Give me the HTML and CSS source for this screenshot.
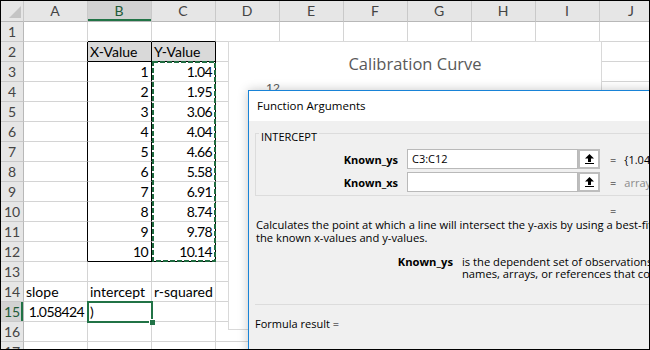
FILE: index.html
```html
<!DOCTYPE html>
<html lang="en">
<head>
  <meta charset="UTF-8" />
  <title>Calibration Curve - INTERCEPT</title>
  <link rel="stylesheet" href="styles.css">
</head>
<body>

  <div class="screen">

    <table class="sheet">
      <colgroup>
        <col class="col-rh">
        <col><col><col><col><col><col><col><col><col><col>
      </colgroup>
      <thead>
        <tr>
          <th class="corner">
            <svg width="12" height="12" viewBox="0 0 12 12"><polygon points="12,0 12,12 0,12" fill="#c4c4c4"/></svg>
          </th>
          <th>A</th><th class="is-sel">B</th><th>C</th><th>D</th><th>E</th>
          <th>F</th><th>G</th><th>H</th><th>I</th><th>J</th>
        </tr>
      </thead>
      <tbody>
        <tr><th>1</th><td></td><td class="bb"></td><td class="bb"></td><td></td><td></td><td></td><td></td><td></td><td></td><td></td></tr>
        <tr><th>2</th><td class="rb"></td><td class="title-cell rb bb">X-Value</td><td class="title-cell rb bb">Y-Value</td><td></td><td></td><td></td><td></td><td></td><td></td><td></td></tr>
        <tr><th>3</th><td class="rb"></td><td class="num rb">1</td><td class="num rb">1.04</td><td></td><td></td><td></td><td></td><td></td><td></td><td></td></tr>
        <tr><th>4</th><td class="rb"></td><td class="num rb">2</td><td class="num rb">1.95</td><td></td><td></td><td></td><td></td><td></td><td></td><td></td></tr>
        <tr><th>5</th><td class="rb"></td><td class="num rb">3</td><td class="num rb">3.06</td><td></td><td></td><td></td><td></td><td></td><td></td><td></td></tr>
        <tr><th>6</th><td class="rb"></td><td class="num rb">4</td><td class="num rb">4.04</td><td></td><td></td><td></td><td></td><td></td><td></td><td></td></tr>
        <tr><th>7</th><td class="rb"></td><td class="num rb">5</td><td class="num rb">4.66</td><td></td><td></td><td></td><td></td><td></td><td></td><td></td></tr>
        <tr><th>8</th><td class="rb"></td><td class="num rb">6</td><td class="num rb">5.58</td><td></td><td></td><td></td><td></td><td></td><td></td><td></td></tr>
        <tr><th>9</th><td class="rb"></td><td class="num rb">7</td><td class="num rb">6.91</td><td></td><td></td><td></td><td></td><td></td><td></td><td></td></tr>
        <tr><th>10</th><td class="rb"></td><td class="num rb">8</td><td class="num rb">8.74</td><td></td><td></td><td></td><td></td><td></td><td></td><td></td></tr>
        <tr><th>11</th><td class="rb"></td><td class="num rb">9</td><td class="num rb">9.78</td><td></td><td></td><td></td><td></td><td></td><td></td><td></td></tr>
        <tr><th>12</th><td class="rb"></td><td class="num rb bb">10</td><td class="num rb bb">10.14</td><td></td><td></td><td></td><td></td><td></td><td></td><td></td></tr>
        <tr><th>13</th><td></td><td></td><td></td><td></td><td></td><td></td><td></td><td></td><td></td><td></td></tr>
        <tr><th>14</th><td>slope</td><td>intercept</td><td>r-squared</td><td></td><td></td><td></td><td></td><td></td><td></td><td></td></tr>
        <tr><th class="is-sel">15</th><td class="num">1.058424</td><td class="active">)</td><td></td><td></td><td></td><td></td><td></td><td></td><td></td><td></td></tr>
        <tr><th>16</th><td></td><td></td><td></td><td></td><td></td><td></td><td></td><td></td><td></td><td></td></tr>
        <tr><th>17</th><td></td><td></td><td></td><td></td><td></td><td></td><td></td><td></td><td></td><td></td></tr>
      </tbody>
    </table>

    <!-- copy range C3:C12 -->
    <svg class="ants" width="650" height="350">
      <rect x="153" y="62" width="62" height="199" fill="none" stroke="#1f6b40" stroke-width="2" stroke-dasharray="5 2" shape-rendering="crispEdges"/>
    </svg>

    <div class="chart">
      <div class="chart-title">Calibration Curve</div>
      <div class="axis-label">12</div>
    </div>

    <div class="dialog">
      <div class="dlg-title">Function Arguments</div>
      <div class="dlg-body">
        <fieldset class="fn-box">
          <legend>INTERCEPT</legend>
          <div class="arg-row">
            <label class="arg-name">Known_ys</label>
            <div class="arg-input">C3:C12</div>
            <span class="ref-btn">
              <svg width="9" height="10" viewBox="0 0 9 10"><path d="M4.5 0 L9 4.5 H6 V8 H3 V4.5 H0 Z" fill="#000"/><rect y="9" width="9" height="1" fill="#000"/></svg>
            </span>
            <span class="arg-eq">=</span>
            <span class="arg-val">{1.04;1.95;3.06;4.04;4.66;5.58;6.91;8.74;9.78;10.14}</span>
          </div>
          <div class="arg-row">
            <label class="arg-name">Known_xs</label>
            <div class="arg-input"></div>
            <span class="ref-btn">
              <svg width="9" height="10" viewBox="0 0 9 10"><path d="M4.5 0 L9 4.5 H6 V8 H3 V4.5 H0 Z" fill="#000"/><rect y="9" width="9" height="1" fill="#000"/></svg>
            </span>
            <span class="arg-eq">=</span>
            <span class="arg-val hint">array</span>
          </div>
        </fieldset>

        <div class="eq-line">=</div>

        <p class="fn-desc">Calculates the point at which a line will intersect the y-axis by using a best-fit regression line plotted through<br>the known x-values and y-values.</p>

        <div class="arg-help">
          <span class="help-name">Known_ys</span>
          <span class="help-text">is the dependent set of observations or data points and can be numbers or<br>names, arrays, or references that contain numbers.</span>
        </div>

        <div class="dlg-rule"></div>
        <div class="result">Formula result =</div>
      </div>
    </div>

  </div>

</body>
</html>
```

FILE: styles.css
```css
body {
  margin: 0;
  background-color: #fff;
}

.screen {
  position: relative;
  width: 650px;
  height: 350px;
  padding: 1px 0 0 1px;
  box-sizing: border-box;
  overflow: hidden;
  font-family: Lato, "Liberation Sans", sans-serif;
  font-size: 14px;
  color: #000;
}

/* black frame round the whole shot */
.screen::after {
  content: "";
  position: absolute;
  top: 0;
  left: 0;
  right: 0;
  bottom: 0;
  border: 1px solid #000;
  z-index: 10;
  pointer-events: none;
}

/* ---------- sheet ---------- */

.sheet {
  border-collapse: separate;
  border-spacing: 0;
  table-layout: fixed;
  width: 663px;
}

.sheet col { width: 64px; }
.sheet col.col-rh { width: 23px; }

.sheet th,
.sheet td {
  height: 19px;
  padding: 0 3px 0 2px;
  line-height: 19px;
  border-right: 1px solid #d4d4d4;
  border-bottom: 1px solid #d4d4d4;
  white-space: nowrap;
  overflow: hidden;
  font-weight: normal;
  text-align: left;
}

.sheet thead th {
  height: 20px;
  line-height: 20px;
  background-color: #e6e6e6;
  border-right-color: #c9c9c9;
  border-bottom-color: #b8b8b8;
  color: #444;
  text-align: center;
}

.sheet tbody th {
  background-color: #e6e6e6;
  border-right-color: #b8b8b8;
  border-bottom-color: #c9c9c9;
  color: #444;
  text-align: center;
  padding: 0;
}

.sheet th.corner {
  padding: 0;
  text-align: right;
  vertical-align: bottom;
  line-height: 0;
}

.sheet th.corner svg {
  margin: 0 2px 3px 0;
}

.sheet thead th.is-sel {
  background-color: #d2d2d2;
  box-shadow: inset 0 -2px 0 #217346;
  color: #1f5a37;
}

.sheet tbody th.is-sel {
  background-color: #d2d2d2;
  box-shadow: inset -2px 0 0 #217346;
  color: #1f5a37;
}

.sheet td.num {
  text-align: right;
  letter-spacing: -0.6px;
}

.sheet td.rb { border-right-color: #000; }
.sheet td.bb { border-bottom-color: #000; }

.sheet td.title-cell {
  background-color: #d9d9d9;
}

.sheet td.active {
  position: relative;
  outline: 2px solid #217346;
  outline-offset: -1px;
  overflow: visible;
}

.sheet td.active::after {
  content: "";
  position: absolute;
  right: -4px;
  bottom: -4px;
  width: 5px;
  height: 5px;
  background-color: #217346;
  border: 1px solid #fff;
  border-width: 1px 0 0 1px;
}

.ants {
  position: absolute;
  top: 0;
  left: 0;
  pointer-events: none;
}

/* ---------- chart ---------- */

.chart {
  position: absolute;
  left: 228px;
  top: 41px;
  width: 374px;
  height: 289px;
  background-color: #fff;
  border: 1px solid #d9d9d9;
  box-sizing: border-box;
}

.chart-title {
  margin-top: 11px;
  text-align: center;
  font-family: "Open Sans", sans-serif;
  font-size: 16.5px;
  line-height: 22px;
  color: #595959;
}

.axis-label {
  margin: 7px 0 0 37px;
  font-size: 12px;
  line-height: 12px;
  color: #595959;
}

/* ---------- dialog ---------- */

.dialog {
  position: absolute;
  left: 248px;
  top: 90px;
  width: 560px;
  height: 290px;
  border-top: 1px solid #1883d7;
  border-left: 1px solid #1883d7;
  background-color: #f0f0f0;
  box-shadow: 0 0 10px rgba(0, 0, 0, 0.22);
  font-family: "Open Sans", sans-serif;
  font-size: 11px;
  color: #000;
}

.dlg-title {
  height: 30px;
  line-height: 30px;
  padding-left: 8px;
  background-color: #fff;
  font-size: 11.5px;
}

.dlg-body {
  padding-left: 6px;
}

.fn-box {
  margin: 2px 0 0 0;
  padding: 0 0 3px 0;
  width: 460px;
  border: 1px solid #dcdcdc;
}

.fn-box legend {
  margin-left: 3px;
  padding: 7px 2px 0 2px;
  line-height: 14px;
}

.arg-row {
  display: flex;
  align-items: center;
  height: 20px;
  margin-top: 3px;
}

.arg-row:first-of-type {
  margin-top: 5px;
}

.arg-name {
  flex-shrink: 0;
  width: 142px;
  text-align: right;
  font-weight: bold;
}

.arg-input {
  flex-shrink: 0;
  width: 171px;
  height: 20px;
  margin-left: 9px;
  padding-left: 4px;
  line-height: 18px;
  background-color: #fff;
  border: 1px solid #b9b9b9;
  box-sizing: border-box;
}

.ref-btn {
  flex-shrink: 0;
  display: flex;
  align-items: center;
  justify-content: center;
  width: 22px;
  height: 20px;
  background-color: #fff;
  border: 2px solid #bdbdbd;
  box-sizing: border-box;
}

.arg-eq {
  margin-left: 10px;
}

.arg-val {
  margin-left: 8px;
  white-space: nowrap;
}

.arg-val.hint {
  color: #8c8c8c;
}

.eq-line {
  margin-top: 7px;
  padding-left: 355px;
  line-height: 16px;
}

.fn-desc {
  margin: -1px 0 0 1px;
  line-height: 13px;
  white-space: nowrap;
  font-size: 11.2px;
}

.arg-help {
  display: flex;
  margin-top: 12px;
  line-height: 12px;
  white-space: nowrap;
  font-size: 11.2px;
}

.help-name {
  flex-shrink: 0;
  width: 198px;
  text-align: right;
  font-weight: bold;
}

.help-text {
  margin-left: 9px;
}

.dlg-rule {
  margin-top: 24px;
  width: 500px;
  border-top: 1px solid #dcdcdc;
}

.result {
  margin-top: 12px;
  line-height: 14px;
}
```
